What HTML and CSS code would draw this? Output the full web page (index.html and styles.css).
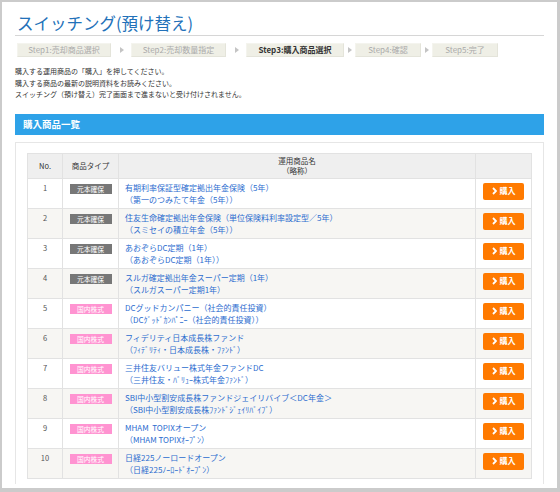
FILE: index.html
```html
<!DOCTYPE html>
<html lang="ja">
<head>
	<meta charset="UTF-8">
	<title>スイッチング(預け替え)</title>
	<link rel="stylesheet" href="styles.css">
</head>
<body>
	<div class="page">
		<h1 class="title">スイッチング(預け替え)</h1>

		<div class="steps">
			<span class="step s1">Step1:売却商品選択</span>
			<span class="sep wide"></span>
			<span class="step s2">Step2:売却数量指定</span>
			<span class="sep wide"></span>
			<span class="step s3 current">Step3:購入商品選択</span>
			<span class="sep"></span>
			<span class="step s4">Step4:確認</span>
			<span class="sep"></span>
			<span class="step s5">Step5:完了</span>
		</div>

		<p class="guide">
			購入する運用商品の「購入」を押してください。<br>
			購入する商品の最新の説明資料をお読みください。<br>
			スイッチング（預け替え）完了画面まで進まないと受け付けされません。
		</p>

		<h2 class="bar">購入商品一覧</h2>

		<div class="panel">
			<table class="list">
				<thead>
					<tr>
						<th class="c-no">No.</th>
						<th class="c-type">商品タイプ</th>
						<th class="c-name">運用商品名<br>（略称）</th>
						<th class="c-btn"></th>
					</tr>
				</thead>
				<tbody>
					<tr>
						<td class="c-no">1</td>
						<td class="c-type"><span class="badge gray">元本確保</span></td>
						<td class="c-name"><a href="#">有期利率保証型確定拠出年金保険（5年）<br>（第一のつみたて年金（5年））</a></td>
						<td class="c-btn"><a class="buy" href="#"><svg width="5" height="8" viewBox="0 0 5 8"><path d="M1 1 L4 4 L1 7" fill="none" stroke="#fff" stroke-width="1.8"/></svg>購入</a></td>
					</tr>
					<tr>
						<td class="c-no">2</td>
						<td class="c-type"><span class="badge gray">元本確保</span></td>
						<td class="c-name"><a href="#">住友生命確定拠出年金保険（単位保険料利率設定型／5年）<br>（スミセイの積立年金（5年））</a></td>
						<td class="c-btn"><a class="buy" href="#"><svg width="5" height="8" viewBox="0 0 5 8"><path d="M1 1 L4 4 L1 7" fill="none" stroke="#fff" stroke-width="1.8"/></svg>購入</a></td>
					</tr>
					<tr>
						<td class="c-no">3</td>
						<td class="c-type"><span class="badge gray">元本確保</span></td>
						<td class="c-name"><a href="#">あおぞらDC定期（1年）<br>（あおぞらDC定期（1年））</a></td>
						<td class="c-btn"><a class="buy" href="#"><svg width="5" height="8" viewBox="0 0 5 8"><path d="M1 1 L4 4 L1 7" fill="none" stroke="#fff" stroke-width="1.8"/></svg>購入</a></td>
					</tr>
					<tr>
						<td class="c-no">4</td>
						<td class="c-type"><span class="badge gray">元本確保</span></td>
						<td class="c-name"><a href="#">スルガ確定拠出年金スーパー定期（1年）<br>（スルガスーパー定期1年）</a></td>
						<td class="c-btn"><a class="buy" href="#"><svg width="5" height="8" viewBox="0 0 5 8"><path d="M1 1 L4 4 L1 7" fill="none" stroke="#fff" stroke-width="1.8"/></svg>購入</a></td>
					</tr>
					<tr>
						<td class="c-no">5</td>
						<td class="c-type"><span class="badge pink">国内株式</span></td>
						<td class="c-name"><a href="#">DCグッドカンパニー（社会的責任投資）<br>（DCｸﾞｯﾄﾞｶﾝﾊﾟﾆｰ（社会的責任投資））</a></td>
						<td class="c-btn"><a class="buy" href="#"><svg width="5" height="8" viewBox="0 0 5 8"><path d="M1 1 L4 4 L1 7" fill="none" stroke="#fff" stroke-width="1.8"/></svg>購入</a></td>
					</tr>
					<tr>
						<td class="c-no">6</td>
						<td class="c-type"><span class="badge pink">国内株式</span></td>
						<td class="c-name"><a href="#">フィデリティ日本成長株ファンド<br>（ﾌｨﾃﾞﾘﾃｨ・日本成長株・ﾌｧﾝﾄﾞ）</a></td>
						<td class="c-btn"><a class="buy" href="#"><svg width="5" height="8" viewBox="0 0 5 8"><path d="M1 1 L4 4 L1 7" fill="none" stroke="#fff" stroke-width="1.8"/></svg>購入</a></td>
					</tr>
					<tr>
						<td class="c-no">7</td>
						<td class="c-type"><span class="badge pink">国内株式</span></td>
						<td class="c-name"><a href="#">三井住友バリュー株式年金ファンドDC<br>（三井住友・ﾊﾞﾘｭｰ株式年金ﾌｧﾝﾄﾞ）</a></td>
						<td class="c-btn"><a class="buy" href="#"><svg width="5" height="8" viewBox="0 0 5 8"><path d="M1 1 L4 4 L1 7" fill="none" stroke="#fff" stroke-width="1.8"/></svg>購入</a></td>
					</tr>
					<tr>
						<td class="c-no">8</td>
						<td class="c-type"><span class="badge pink">国内株式</span></td>
						<td class="c-name"><a href="#">SBI中小型割安成長株ファンドジェイリバイブ＜DC年金＞<br>（SBI中小型割安成長株ﾌｧﾝﾄﾞｼﾞｪｲﾘﾊﾞｲﾌﾞ）</a></td>
						<td class="c-btn"><a class="buy" href="#"><svg width="5" height="8" viewBox="0 0 5 8"><path d="M1 1 L4 4 L1 7" fill="none" stroke="#fff" stroke-width="1.8"/></svg>購入</a></td>
					</tr>
					<tr>
						<td class="c-no">9</td>
						<td class="c-type"><span class="badge pink">国内株式</span></td>
						<td class="c-name"><a href="#">MHAM&nbsp; TOPIXオープン<br>（MHAM TOPIXｵｰﾌﾟﾝ）</a></td>
						<td class="c-btn"><a class="buy" href="#"><svg width="5" height="8" viewBox="0 0 5 8"><path d="M1 1 L4 4 L1 7" fill="none" stroke="#fff" stroke-width="1.8"/></svg>購入</a></td>
					</tr>
					<tr>
						<td class="c-no">10</td>
						<td class="c-type"><span class="badge pink">国内株式</span></td>
						<td class="c-name"><a href="#">日経225ノーロードオープン<br>（日経225ﾉｰﾛｰﾄﾞｵｰﾌﾟﾝ）</a></td>
						<td class="c-btn"><a class="buy" href="#"><svg width="5" height="8" viewBox="0 0 5 8"><path d="M1 1 L4 4 L1 7" fill="none" stroke="#fff" stroke-width="1.8"/></svg>購入</a></td>
					</tr>
				</tbody>
			</table>
		</div>
	</div>
</body>
</html>
```

FILE: styles.css
```css
html, body, h1, h2, p, table {
	margin: 0;
	padding: 0;
}
body {
	background: #cbcbcb;
	padding: 2px 3px 4px 2px;
	font-family: "Noto Sans CJK JP", "Noto Sans", sans-serif;
	color: #333;
}
.page {
	height: 486px;
	background: #fff;
	padding: 10px 13px 0;
	box-sizing: border-box;
	overflow: hidden;
}
.title {
	font-size: 16.5px;
	line-height: 23px;
	font-weight: normal;
	color: #2271b9;
	padding-left: 2px;
	border-bottom: 1px solid #d6d6d6;
}

/* steps */
.steps {
	display: flex;
	align-items: center;
	margin-top: 7px;
	padding-left: 2px;
	height: 14px;
}
.step {
	height: 14px;
	box-sizing: border-box;
	background: #efefe6;
	border: 1px solid #e4e4da;
	border-left-color: #f4f4ee;
	border-top-color: #f4f4ee;
	font-size: 8px;
	line-height: 12px;
	text-align: center;
	color: #aaa;
}
.s1 { width: 94px; }
.s2 { width: 95px; }
.s3 { width: 98px; }
.s4, .s5 { width: 66px; }
.step.current {
	color: #333;
	font-weight: bold;
}
.sep {
	width: 0;
	height: 0;
	border-left: 4px solid #c4c4c4;
	border-top: 3px solid transparent;
	border-bottom: 3px solid transparent;
	margin: 0 3px 0 4px;
}
.sep.wide {
	margin: 0 7px 0 9px;
}

.guide {
	margin-top: 9px;
	font-size: 7px;
	line-height: 11.5px;
	color: #333;
}

.bar {
	margin-top: 13px;
	height: 21px;
	background: #2ea2e8;
	color: #fff;
	font-size: 9.5px;
	line-height: 21px;
	font-weight: bold;
	padding-left: 8px;
}

.panel {
	margin-top: 7px;
	border: 1px solid #e6e6e6;
	border-bottom: none;
	padding: 10px 11px 5px;
}

/* table */
.list {
	width: 505px;
	border-collapse: collapse;
	border: 1px solid #c6c6c6;
	font-size: 8px;
	table-layout: fixed;
}
.list th, .list td {
	border: 1px solid #e2e2e2;
	padding: 0;
}
.list thead tr {
	height: 25px;
}
.list tbody tr {
	height: 30px;
}
.list th {
	background: #efefef;
	font-weight: normal;
	font-size: 7.5px;
	line-height: 9.5px;
	color: #333;
	text-align: center;
	vertical-align: middle;
}
.list td {
	vertical-align: top;
	line-height: 12px;
}
.list tbody tr:nth-child(even) td {
	background: #f7f6f3;
}
.c-no { width: 34px; }
.c-type { width: 55px; }
.c-btn { width: 55px; }
td.c-no {
	text-align: center;
	padding-top: 3px;
	color: #555;
	font-size: 7.5px;
}
td.c-type {
	padding-top: 5px;
}
.badge {
	display: block;
	width: 42px;
	height: 10px;
	margin: 0 auto;
	font-size: 6.8px;
	line-height: 10px;
	color: #fff;
	text-align: center;
}
.badge.gray {
	background: #777;
}
.badge.pink {
	background: #ff93d1;
}
td.c-name {
	padding: 3px 0 0 6px;
}
td.c-name a {
	color: #2b6ccf;
	text-decoration: none;
	white-space: nowrap;
}
td.c-btn {
	text-align: center;
	padding-top: 4px;
}
.buy {
	display: inline-flex;
	align-items: center;
	justify-content: center;
	gap: 3px;
	width: 41px;
	height: 17px;
	background: #ff7a00;
	border-radius: 2px;
	color: #fff;
	font-size: 8px;
	font-weight: bold;
	text-decoration: none;
	vertical-align: top;
}
```
